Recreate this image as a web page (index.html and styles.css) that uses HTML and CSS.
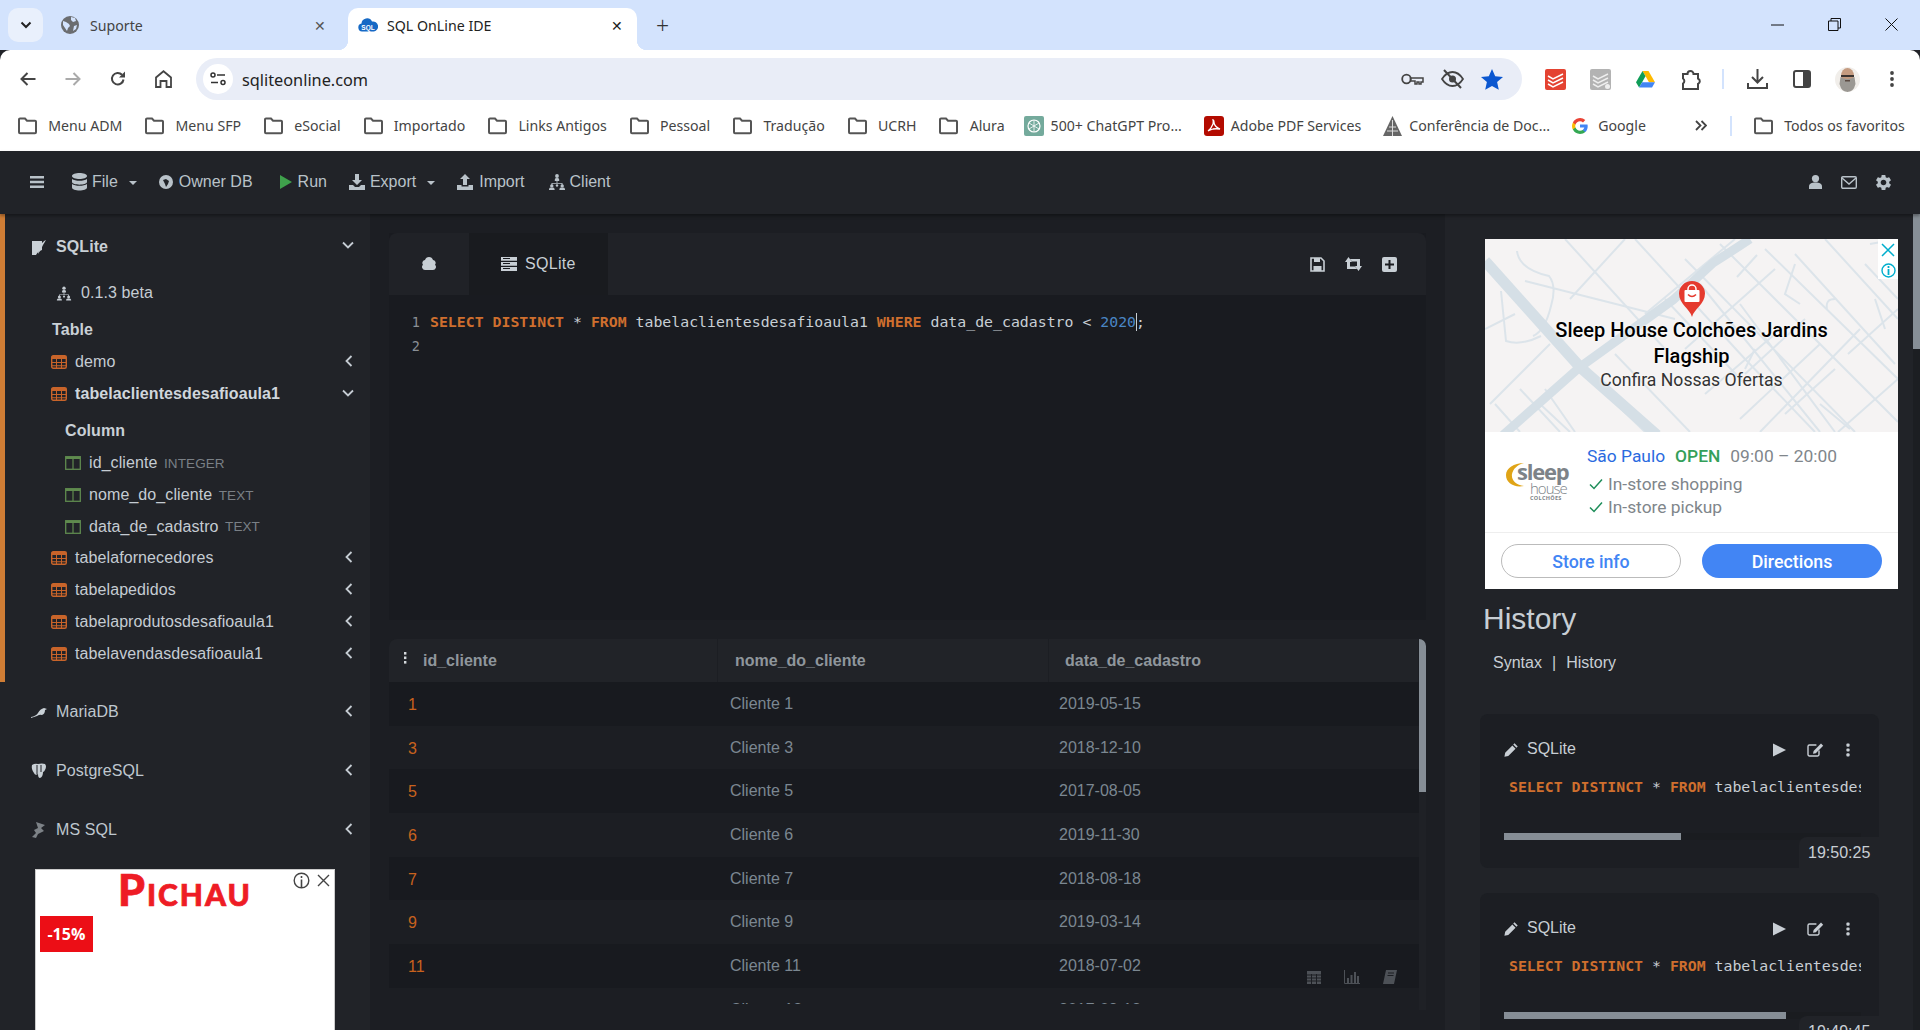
FILE: index.html
```html
<!DOCTYPE html>
<html lang="en">
<head>
<meta charset="utf-8">
<title>SQL OnLine IDE</title>
<link rel="stylesheet" href="styles.css">
</head>
<body>
<svg class="defs" width="0" height="0" aria-hidden="true">
  <defs>
    <symbol id="folder" viewBox="0 0 20 18"><path d="M1.500 2.500a1 1 0 0 1 1-1h5l2 2.200h8a1 1 0 0 1 1 1v10.600a1 1 0 0 1-1 1h-15a1 1 0 0 1-1-1z" fill="none" stroke="#555" stroke-width="2"/></symbol>
    <symbol id="tbl" viewBox="0 0 16 14"><rect x=".7" y=".7" width="14.600" height="12.600" rx="1.500" fill="none" stroke="#c8642a" stroke-width="1.400"/><path d="M.7 1h14.600v3H.7zM.7 7h14.600v1H.7zM.7 10.200h14.600v1H.7zM5 4h1v9H5zM10 4h1v9h-1z" fill="#c8642a"/></symbol>
    <symbol id="col" viewBox="0 0 16 14"><rect x=".7" y=".7" width="14.600" height="12.600" fill="none" stroke="#5f8a4e" stroke-width="1.300"/><path d="M.7 1h14.600v2H.7zM7.400 2h1.200v11H7.400z" fill="#5f8a4e"/></symbol>
    <symbol id="left" viewBox="0 0 10 14"><path d="M7.500 2 2.500 7l5 5" fill="none" stroke="#c5ccd3" stroke-width="1.800"/></symbol>
    <symbol id="down" viewBox="0 0 14 10"><path d="M2 2.500l5 5 5-5" fill="none" stroke="#c5ccd3" stroke-width="1.800"/></symbol>
    <symbol id="site" viewBox="0 0 18 16"><circle cx="9" cy="2" r="1.900" fill="currentColor"/><path d="M6.800 7V5.400q0-1.300 2.200-1.300t2.200 1.300V7zM8.600 7h.8v2.500h-.8zM3.500 9h11v.8h-11zM3.500 9h.8v2h-.8zM13.700 9h.8v2h-.8z" fill="currentColor"/><circle cx="3.800" cy="11.900" r="1.700" fill="currentColor"/><circle cx="14.200" cy="11.900" r="1.700" fill="currentColor"/><circle cx="9" cy="11.500" r="1.200" fill="currentColor"/><path d="M1 16v-1q0-1.400 2.800-1.400t2.800 1.400v1zM11.400 16v-1q0-1.400 2.800-1.400t2.800 1.400v1z" fill="currentColor"/></symbol>
    <symbol id="pencil" viewBox="0 0 14 14"><path d="M9.800 1.200l3 3-1.200 1.200-3-3zM7.800 3.200l3 3-6.800 6.800-3.600.7.700-3.700z" fill="currentColor"/></symbol>
    <symbol id="edit" viewBox="0 0 17 14"><path d="M12 7.600v4a1.400 1.400 0 0 1-1.400 1.400H2.400A1.400 1.400 0 0 1 1 11.600V3.400A1.400 1.400 0 0 1 2.400 2h7" fill="none" stroke="currentColor" stroke-width="1.400"/><path d="M14 .6l2.200 2.200-7.400 7.400-2.800.6.600-2.800z" fill="currentColor"/></symbol>
    <symbol id="kebab" viewBox="0 0 4 14"><rect x=".4" y=".5" width="3.200" height="3.200" rx="1" fill="currentColor"/><rect x=".4" y="5.400" width="3.200" height="3.200" rx="1" fill="currentColor"/><rect x=".4" y="10.300" width="3.200" height="3.200" rx="1" fill="currentColor"/></symbol>
    <symbol id="gear" viewBox="0 0 24 24"><path d="M19.140 12.940c.04-.3.06-.61.06-.94 0-.32-.02-.64-.07-.94l2.030-1.580a.49.49 0 0 0 .12-.61l-1.920-3.320a.488.488 0 0 0-.59-.22l-2.390.96c-.5-.38-1.030-.7-1.620-.94l-.36-2.540a.484.484 0 0 0-.48-.41h-3.840c-.24 0-.43.17-.47.41l-.36 2.540c-.59.24-1.130.57-1.620.94l-2.390-.96c-.22-.08-.47 0-.59.22L2.740 8.870c-.12.21-.08.47.12.61l2.030 1.580c-.05.3-.09.63-.09.94s.02.64.07.94l-2.030 1.580a.49.49 0 0 0-.12.61l1.920 3.320c.12.22.37.29.59.22l2.390-.96c.5.38 1.030.7 1.620.94l.36 2.540c.05.24.24.41.48.41h3.840c.24 0 .44-.17.47-.41l.36-2.540c.59-.24 1.130-.56 1.620-.94l2.390.96c.22.08.47 0 .59-.22l1.920-3.320c.12-.22.07-.47-.12-.61l-2.010-1.580zM12 15.600c-1.980 0-3.600-1.620-3.600-3.600s1.620-3.600 3.600-3.600 3.600 1.620 3.600 3.600-1.620 3.600-3.600 3.600z" fill="currentColor"/></symbol>
    <symbol id="down-tray" viewBox="0 0 16 16"><path d="M6 0h4v6h3l-5 5-5-5h3zM0 11h4l2 2h4l2-2h4v5H0z" fill="currentColor"/></symbol>
    <symbol id="up-tray" viewBox="0 0 16 16"><path d="M8 0l5 5h-3v6H6V5H3zM0 11h4.500v1.500h7V11H16v5H0z" fill="currentColor"/></symbol>
    <symbol id="check" viewBox="0 0 14 12"><path d="M1 6.500l4 4L13 1.500" fill="none" stroke="#1e8e5a" stroke-width="1.500"/></symbol>
    <symbol id="play" viewBox="0 0 14 14"><path d="M0 0l14 7-14 7z" fill="currentColor"/></symbol>
  </defs>
</svg>

<header class="tabstrip">
  <button class="tab-list"><svg width="12" height="8" viewBox="0 0 12 8"><path d="M1.500 1.500 6 6l4.500-4.500" fill="none" stroke="#222" stroke-width="2"/></svg></button>
  <div class="tab">
    <svg class="favicon" width="18" height="18" viewBox="0 0 18 18"><circle cx="9" cy="9" r="9" fill="#6b6d70"/><path d="M2 5l3 1 3 2 1 2-2 2-1 3-2-3-2-3zM10 1l4 1 1 3-3 1-2-2zM13 10l3-1-1 4-3 2z" fill="#d3e3fd"/></svg>
    <span class="tab-title">Suporte</span>
    <span class="tab-x">✕</span>
  </div>
  <div class="tab active">
    <svg class="favicon" width="20" height="14" viewBox="0 0 20 14"><path d="M4 13.500a4 4 0 0 1-.5-7.900A5.500 5.500 0 0 1 14 3.500a5 5 0 0 1 2 10z" fill="#1669c5"/><text x="10" y="11.500" text-anchor="middle" class="fav-text">SQL</text></svg>
    <span class="tab-title">SQL OnLine IDE</span>
    <span class="tab-x">✕</span>
  </div>
  <span class="new-tab">+</span>
  <div class="win-controls">
    <svg width="13" height="2" viewBox="0 0 13 2"><path d="M0 1h13" stroke="#111" stroke-width="1"/></svg>
    <svg width="13" height="13" viewBox="0 0 13 13"><path d="M.5 3h9.500v9.500H.5zM3 3V.5h9.500V10H10" fill="none" stroke="#111"/></svg>
    <svg width="13" height="13" viewBox="0 0 13 13"><path d="M.5.5l12 12M12.500.5l-12 12" stroke="#111" fill="none"/></svg>
  </div>
</header>

<nav class="toolbar">
  <svg class="tb back" width="16" height="14" viewBox="0 0 16 14"><path d="M15.500 7H2M7.500 1 1.500 7l6 6" fill="none" stroke="#444" stroke-width="2"/></svg>
  <svg class="tb fwd" width="16" height="14" viewBox="0 0 16 14"><path d="M.5 7H14M8.500 1l6 6-6 6" fill="none" stroke="#aaa" stroke-width="2"/></svg>
  <svg class="tb reload" width="16" height="16" viewBox="0 0 16 16"><path d="M13.500 8.500A5.800 5.800 0 1 1 12 3.800" fill="none" stroke="#444" stroke-width="2"/><path d="M15 .5v6H9z" fill="#444"/></svg>
  <svg class="tb home" width="17" height="18" viewBox="0 0 17 18"><path d="M1 7.500 8.500 1.200 16 7.500V17h-4.500v-6h-6v6H1z" fill="none" stroke="#444" stroke-width="1.800"/></svg>
  <div class="omnibox">
    <span class="site-info"><svg width="16" height="14" viewBox="0 0 16 14"><circle cx="3" cy="3" r="2" fill="none" stroke="#333" stroke-width="1.500"/><path d="M7 3h8M1 10.500h7" stroke="#333" stroke-width="1.600"/><circle cx="13" cy="10.500" r="2" fill="none" stroke="#333" stroke-width="1.500"/></svg></span>
    <span class="url">sqliteonline.com</span>
    <div class="omni-right">
      <svg width="23" height="13" viewBox="0 0 23 13"><circle cx="5.500" cy="6" r="4.300" fill="none" stroke="#444" stroke-width="1.800"/><path d="M9.500 5h12.500v4h-2v2h-2V9h-2v2h-2V8H9.500z" fill="none" stroke="#444" stroke-width="1.500"/></svg>
      <svg width="23" height="20" viewBox="0 0 23 20"><path d="M1 10q4.500-7 10.500-7T22 10q-4.500 7-10.500 7T1 10z" fill="none" stroke="#444" stroke-width="1.800"/><circle cx="11.500" cy="10" r="3.500" fill="#444"/><path d="M3 1l17 18" stroke="#444" stroke-width="2"/></svg>
      <svg width="22" height="21" viewBox="0 0 22 21"><path d="M11 0l3.200 7.200 7.800.8-5.900 5.100 1.700 7.700L11 16.900 4.200 20.800l1.700-7.700L0 8l7.800-.8z" fill="#0b57d0"/></svg>
    </div>
  </div>
  <div class="extensions">
    <svg class="ext-a" width="21" height="21" viewBox="0 0 21 21"><rect width="21" height="21" rx="2" fill="#e44332"/><path d="M3 7l5 3 10-5M3 11l5 3 10-5M3 15l5 3 10-5" fill="none" stroke="#fff" stroke-width="1.500"/></svg>
    <svg class="ext-b" width="21" height="21" viewBox="0 0 21 21"><rect width="21" height="21" rx="2" fill="#b3b3b3"/><path d="M3 7l5 3 10-5M3 11l5 3 10-5M3 15l5 3 10-5" fill="none" stroke="#eee" stroke-width="1.500"/><circle cx="17.500" cy="17.500" r="2.500" fill="#eee"/></svg>
    <svg class="ext-c" width="19" height="17" viewBox="0 0 19 17"><path d="M6.500 0h6l6.500 11.200h-6z" fill="#ffba00"/><path d="M6.500 0l3 5.200-6.400 11.300L0 11.200z" fill="#0f9d58"/><path d="M3.100 16.500l3-5.300H19l-3 5.300z" fill="#4285f4"/></svg>
    <svg class="ext-d" width="21" height="21" viewBox="0 0 21 21"><path d="M2 5h4.500a3 3 0 1 1 6 0H17v4.500a3 3 0 0 1 0 5.500v5H2v-5.500a3 3 0 0 0 0-5z" fill="none" stroke="#444" stroke-width="2"/></svg>
    <span class="ext-sep"></span>
    <svg class="ext-e" width="21" height="20" viewBox="0 0 21 20"><path d="M10.500 0v13M5 8l5.500 5.500L16 8M1 14v5h19v-5" fill="none" stroke="#444" stroke-width="2"/></svg>
    <svg class="ext-f" width="18" height="18" viewBox="0 0 18 18"><rect x="1" y="1" width="16" height="16" rx="2" fill="none" stroke="#444" stroke-width="2"/><rect x="10" y="1" width="7" height="16" fill="#444"/></svg>
    <svg class="ext-g" width="25" height="25" viewBox="0 0 25 25"><defs><clipPath id="av"><circle cx="12.500" cy="12.500" r="12.500"/></clipPath></defs><g clip-path="url(#av)"><rect width="25" height="25" fill="#f1eeea"/><ellipse cx="12.500" cy="9" rx="6.500" ry="8" fill="#c49b80"/><path d="M5.500 10q7 4 14 0l1 7q-2 8-8 8t-8-8z" fill="#9b9893"/><rect x="6" y="8" width="13" height="2" fill="#3a3330"/><rect x="10" y="13" width="5" height="1.500" fill="#5b4a42"/></g></svg>
    <svg class="ext-h" width="4" height="16" viewBox="0 0 4 16"><circle cx="2" cy="2" r="1.900" fill="#444"/><circle cx="2" cy="8" r="1.900" fill="#444"/><circle cx="2" cy="14" r="1.900" fill="#444"/></svg>
  </div>
</nav>

<nav class="bookmarks">
  <span class="bm"><svg width="21" height="18"><use href="#folder"/></svg>Menu ADM</span>
  <span class="bm"><svg width="21" height="18"><use href="#folder"/></svg>Menu SFP</span>
  <span class="bm"><svg width="21" height="18"><use href="#folder"/></svg>eSocial</span>
  <span class="bm"><svg width="21" height="18"><use href="#folder"/></svg>Importado</span>
  <span class="bm"><svg width="21" height="18"><use href="#folder"/></svg>Links Antigos</span>
  <span class="bm"><svg width="21" height="18"><use href="#folder"/></svg>Pessoal</span>
  <span class="bm"><svg width="21" height="18"><use href="#folder"/></svg>Tradução</span>
  <span class="bm"><svg width="21" height="18"><use href="#folder"/></svg>UCRH</span>
  <span class="bm"><svg width="21" height="18"><use href="#folder"/></svg>Alura</span>
  <span class="bm bm-ic bm-gpt"><svg width="20" height="20" viewBox="0 0 20 20"><rect width="20" height="20" rx="2" fill="#74aa9c"/><circle cx="10" cy="10" r="6" fill="none" stroke="#fff" stroke-width="1.200"/><path d="M10 4v12M5 7l10 6M15 7L5 13" stroke="#fff" stroke-width=".8"/></svg>500+ ChatGPT Pro...</span>
  <span class="bm bm-ic"><svg width="20" height="20" viewBox="0 0 20 20"><rect width="20" height="20" rx="3" fill="#b30b00"/><path d="M4 15q3-2 5-7 .5-3 0-4 1 0 1 3 1 4 6 6-4-.5-7 0-3 1-5 2z" fill="none" stroke="#fff" stroke-width="1.300"/></svg>Adobe PDF Services</span>
  <span class="bm bm-ic"><svg width="19" height="20" viewBox="0 0 19 20"><path d="M9.500 0L19 20H0z" fill="#666"/><path d="M9.500 4v16M6 11h7M4 15h11" stroke="#ddd" stroke-width="1"/></svg>Conferência de Doc...</span>
  <span class="bm"><svg width="16" height="16" viewBox="0 0 16 16"><path d="M15.700 8.200c0-.6-.1-1.100-.2-1.600H8v3h4.300a3.700 3.700 0 0 1-1.600 2.400v2h2.600c1.500-1.400 2.400-3.400 2.400-5.800z" fill="#4285f4"/><path d="M8 16c2.200 0 4-.7 5.300-2l-2.600-2c-.7.500-1.600.8-2.700.8-2.100 0-3.800-1.400-4.500-3.300H.9v2.100A8 8 0 0 0 8 16z" fill="#34a853"/><path d="M3.500 9.500a4.800 4.800 0 0 1 0-3V4.400H.9a8 8 0 0 0 0 7.200z" fill="#fbbc05"/><path d="M8 3.200c1.200 0 2.200.4 3 1.200l2.300-2.300A8 8 0 0 0 .9 4.400l2.600 2.100C4.200 4.600 5.900 3.200 8 3.200z" fill="#ea4335"/></svg>Google</span>
  <span class="bm-more"><svg width="12" height="11" viewBox="0 0 12 11"><path d="M1 1l4.500 4.500L1 10M6.500 1 11 5.500 6.500 10" fill="none" stroke="#444" stroke-width="1.800"/></svg></span>
  <span class="bm-sep"></span>
  <span class="bm bm-all"><svg width="21" height="18"><use href="#folder"/></svg>Todos os favoritos</span>
</nav>

<div class="app-nav">
  <div class="app-nav-left">
    <svg class="nav-bars" width="14" height="12" viewBox="0 0 14 12"><path d="M0 0h14v2.400H0zM0 4.800h14v2.400H0zM0 9.600h14V12H0z" fill="#b9c2c9"/></svg>
    <span class="nav-item nav-file"><svg width="15" height="18" viewBox="0 0 15 18"><path d="M0 3c0-4 15-4 15 0s-15 4-15 0zM0 6c3 2.400 12 2.400 15 0v3c0 3.500-15 3.500-15 0zM0 11c3 2.400 12 2.400 15 0v3.500c0 4-15 4-15 0z" fill="#b9c2c9"/></svg>File<i class="caret"></i></span>
    <span class="nav-item nav-owner"><svg width="14" height="14" viewBox="0 0 14 14"><circle cx="7" cy="7" r="7" fill="#b9c2c9"/><path d="M4 5l3-1 3 2-1 3-2 3-1-3z" fill="#212328"/></svg>Owner DB</span>
    <span class="nav-item nav-run"><svg width="12" height="14" viewBox="0 0 12 14"><path d="M0 0l12 7-12 7z" fill="#3fa14c"/></svg>Run</span>
    <span class="nav-item nav-export"><svg width="16" height="16"><use href="#down-tray"/></svg>Export<i class="caret"></i></span>
    <span class="nav-item nav-import"><svg width="16" height="16"><use href="#up-tray"/></svg>Import</span>
    <span class="nav-item nav-client"><svg width="18" height="16"><use href="#site"/></svg>Client</span>
  </div>
  <div class="app-nav-right">
    <svg class="nav-user" width="13" height="14" viewBox="0 0 13 14"><circle cx="6.500" cy="3.600" r="3.600" fill="#b9c2c9"/><path d="M0 14v-2.500C0 8.800 2.500 7.500 6.500 7.500s6.500 1.300 6.500 4V14z" fill="#b9c2c9"/></svg>
    <svg class="nav-mail" width="16" height="13" viewBox="0 0 16 13"><rect x=".7" y=".7" width="14.600" height="11.600" rx="1.200" fill="none" stroke="#b9c2c9" stroke-width="1.400"/><path d="M1 2l7 6 7-6" fill="none" stroke="#b9c2c9" stroke-width="1.400"/></svg>
    <svg class="gear" width="19" height="19"><use href="#gear"/></svg>
  </div>
</div>

<main class="workspace">
  <aside class="sidebar">
    <section class="db-open">
      <div class="db-head">
        <svg class="db-ico" width="15" height="15" viewBox="0 0 15 15"><path d="M0 1h10v9q-4 1-6 5H0z" fill="#c9d0d6"/><path d="M14 0q-3 1-6 6-2 4-2 8 3-4 5-9z" fill="#c9d0d6"/></svg>
        <strong class="db-name">SQLite</strong>
        <svg class="chev" width="14" height="10"><use href="#down"/></svg>
      </div>
      <div class="version"><svg width="16" height="15"><use href="#site"/></svg>0.1.3 beta</div>
      <div class="label-table">Table</div>
      <div class="t-row"><svg width="16" height="14"><use href="#tbl"/></svg><span>demo</span><svg class="chev-l" width="10" height="14"><use href="#left"/></svg></div>
      <div class="t-row t-open"><svg width="16" height="14"><use href="#tbl"/></svg><span>tabelaclientesdesafioaula1</span><svg class="chev-d" width="14" height="10"><use href="#down"/></svg></div>
      <div class="label-col">Column</div>
      <div class="c-row"><svg width="16" height="14"><use href="#col"/></svg><span>id_cliente</span><small>INTEGER</small></div>
      <div class="c-row"><svg width="16" height="14"><use href="#col"/></svg><span>nome_do_cliente</span><small>TEXT</small></div>
      <div class="c-row c-last"><svg width="16" height="14"><use href="#col"/></svg><span>data_de_cadastro</span><small>TEXT</small></div>
      <div class="t-row"><svg width="16" height="14"><use href="#tbl"/></svg><span>tabelafornecedores</span><svg class="chev-l" width="10" height="14"><use href="#left"/></svg></div>
      <div class="t-row"><svg width="16" height="14"><use href="#tbl"/></svg><span>tabelapedidos</span><svg class="chev-l" width="10" height="14"><use href="#left"/></svg></div>
      <div class="t-row"><svg width="16" height="14"><use href="#tbl"/></svg><span>tabelaprodutosdesafioaula1</span><svg class="chev-l" width="10" height="14"><use href="#left"/></svg></div>
      <div class="t-row"><svg width="16" height="14"><use href="#tbl"/></svg><span>tabelavendasdesafioaula1</span><svg class="chev-l" width="10" height="14"><use href="#left"/></svg></div>
    </section>
    <div class="db-row"><svg width="16" height="12" viewBox="0 0 16 12"><path d="M0 11Q5 10 7 7 9 3 13 2l3 1-2 1q0 4-3 5-2-1-5 1-3 1-6 2z" fill="#c9d0d6"/></svg><span>MariaDB</span><svg class="chev-l" width="10" height="14"><use href="#left"/></svg></div>
    <div class="db-row"><svg width="16" height="16" viewBox="0 0 16 16"><path d="M1 2q3-2 6-1 4-1 7 0 2 2 0 6-1 2-2 2 0 5-3 6-2 0-2-4-3 2-4-1-3-4-2-8z" fill="#c9d0d6"/><path d="M6 2v9M10 2v7" stroke="#212328"/></svg><span>PostgreSQL</span><svg class="chev-l" width="10" height="14"><use href="#left"/></svg></div>
    <div class="db-row"><svg width="16" height="16" viewBox="0 0 16 16"><path d="M5 0l9 3-4 3 3 3-6 3-2 4-4-1 4-4-2-3 4-2z" fill="#7d8287"/></svg><span>MS SQL</span><svg class="chev-l" width="10" height="14"><use href="#left"/></svg></div>
    <div class="side-ad">
      <span class="pichau">Pichau</span>
      <svg class="ad-i" width="17" height="17" viewBox="0 0 17 17"><circle cx="8.500" cy="8.500" r="7.300" fill="none" stroke="#444" stroke-width="1.400"/><path d="M8.500 7.500V16M8.500 4v2" stroke="#444" stroke-width="1.600"/></svg>
      <svg class="ad-x" width="13" height="13" viewBox="0 0 13 13"><path d="M1 1l11 11M12 1 1 12" stroke="#444" stroke-width="1.400"/></svg>
      <span class="discount">-15%</span>
    </div>
  </aside>

  <section class="center">
    <div class="editor">
      <div class="ed-tabs">
        <span class="ed-cloud"><svg width="14" height="15" viewBox="0 0 14 15"><path d="M3 15a3 3 0 0 1-2-5.200A3 3 0 0 1 3 5 4.200 4.200 0 0 1 11 5a3 3 0 0 1 2 4.800A3 3 0 0 1 11 15z" fill="#c8cfd5"/></svg></span>
        <span class="ed-tab"><svg width="16" height="14" viewBox="0 0 16 14"><path d="M0 0h16v3.800H0zM0 5h16v3.800H0zM0 10h16v4H0z" fill="#c8cfd5"/><path d="M2 1.500h7M2 6.500h7M2 11.500h7" stroke="#191b1f"/></svg>SQLite</span>
        <div class="ed-actions">
          <svg width="15" height="15" viewBox="0 0 15 15"><path d="M1 1h10l3 3v10H1z" fill="none" stroke="#c8cfd5" stroke-width="1.600"/><path d="M4 1h6v4H4zM3.500 9h8v5h-8z" fill="#c8cfd5"/></svg>
          <svg width="17" height="14" viewBox="0 0 17 14"><path d="M3.500 0L7 5H5v4.500h5l2 2.500H2V5H0zM13.500 14L10 9h2V4.500H7L5 2h10v7h2z" fill="#c8cfd5"/></svg>
          <svg width="15" height="15" viewBox="0 0 15 15"><rect width="15" height="15" rx="2" fill="#c8cfd5"/><path d="M7.500 3v9M3 7.500h9" stroke="#191b1f" stroke-width="2"/></svg>
        </div>
      </div>
      <div class="ed-body">
        <div class="code-line"><span class="ln">1</span><code><b>SELECT DISTINCT</b> * <b>FROM</b> tabelaclientesdesafioaula1 <b>WHERE</b> data_de_cadastro &lt; <em>2020</em><i class="cursor"></i>;</code></div>
        <div class="code-line"><span class="ln">2</span><code></code></div>
      </div>
    </div>

    <div class="results">
      <div class="grid-wrap">
        <div class="grid-head">
          <div class="h1"><svg class="h-kebab" width="4" height="12" viewBox="0 0 4 12"><rect x="1" y="0" width="2.400" height="2.600" fill="#d5d9dd"/><rect x="1" y="4.500" width="2.400" height="2.600" fill="#d5d9dd"/><rect x="1" y="9" width="2.400" height="2.600" fill="#d5d9dd"/></svg>id_cliente</div>
          <div class="h2">nome_do_cliente</div>
          <div class="h3">data_de_cadastro</div>
        </div>
        <div class="row"><span class="id">1</span><span class="c2">Cliente 1</span><span class="c3">2019-05-15</span></div>
        <div class="row alt"><span class="id">3</span><span class="c2">Cliente 3</span><span class="c3">2018-12-10</span></div>
        <div class="row"><span class="id">5</span><span class="c2">Cliente 5</span><span class="c3">2017-08-05</span></div>
        <div class="row alt"><span class="id">6</span><span class="c2">Cliente 6</span><span class="c3">2019-11-30</span></div>
        <div class="row"><span class="id">7</span><span class="c2">Cliente 7</span><span class="c3">2018-08-18</span></div>
        <div class="row alt"><span class="id">9</span><span class="c2">Cliente 9</span><span class="c3">2019-03-14</span></div>
        <div class="row"><span class="id">11</span><span class="c2">Cliente 11</span><span class="c3">2018-07-02</span></div>
        <div class="row alt"><span class="id">13</span><span class="c2">Cliente 13</span><span class="c3">2017-03-13</span></div>
        <div class="float-tools">
          <svg width="14" height="13" viewBox="0 0 14 13"><path d="M0 0h14v13H0z" fill="#4d5157"/><path d="M0 4h14M0 7h14M0 10h14M4.500 3v10M9.500 3v10" stroke="#1c1e23"/></svg>
          <svg width="16" height="14" viewBox="0 0 16 14"><path d="M.5 0v13.500H16" fill="none" stroke="#4d5157"/><path d="M3 8h2v5H3zM6.500 5h2v8h-2zM10 2h2v11h-2zM13 6h2v7h-2z" fill="#4d5157"/></svg>
          <svg width="14" height="14" viewBox="0 0 14 14"><path d="M3 0h11l-3 14H0z" fill="#4d5157"/><path d="M5 3h6M4.500 5.500h6" stroke="#1c1e23"/></svg>
        </div>
      </div>
      <div class="v-scroll"><span></span></div>
    </div>
  </section>

  <aside class="rightpane">
    <div class="rp-content">
      <div class="map-ad">
        <div class="map">
          <svg class="map-bg" width="413" height="193" viewBox="0 0 413 193">
            <rect width="413" height="193" fill="#f5f3f3"/>
            <g fill="none" stroke="#dce4ea" stroke-width="2">
              <path d="M32 12q2 18 32 25 8 10 2 30-6 25-18 30M40 42l150 38M16 52l5 50q15 5 35-5M0 90l30-15M5 165l60-60M35 150l40 43M10 165l25 28M55 165l30 28"/>
              <path d="M80 0l100 110M150 0l110 120 70 73M215 45l120 148M250 0l-90 75M85 60l55-60M290 30l-90 80M255 65l95 128M310 15l100 110M340 0l73 80M290 95l-70 60M335 105l-80 75M375 90l-100 103M413 140l-60 53M380 25l33 35M180 60l80 85M95 130l65 63M130 115l75 78M60 150l30 43M200 20l170 173M235 5l178 178M280 10l133 130M320 80l-60 55M350 130l-50 45M413 70l-50 45M385 5l28-5"/>
              <path d="M310 25l-10 30 15 10M350 60q-10 0-8 10M390 60l10 30M270 110l-10 20M335 165l30 25M252 38l20-22"/>
            </g>
            <path d="M0 22 95 128 172 196" fill="none" stroke="#d5dfe6" stroke-width="11"/>
            <path d="M265 0Q250 10 228 24L188 61 95 128 18 196" fill="none" stroke="#d5dfe6" stroke-width="9"/>
          </svg>
          <svg class="pin" width="26" height="36" viewBox="0 0 26 36"><path d="M13 36C11 28 0 23 0 12.500a13 12.500 0 0 1 26 0C26 23 15 28 13 36z" fill="#e53a2e"/><rect x="5.500" y="9" width="15" height="12" rx="1" fill="#fff"/><path d="M9 10V8a4 4 0 0 1 8 0v2" fill="none" stroke="#fff" stroke-width="1.500"/><path d="M9 13.500q4 4 8 0" fill="none" stroke="#e53a2e" stroke-width="1.500"/></svg>
          <div class="map-title">Sleep House Colchões Jardins<br>Flagship</div>
          <div class="map-sub">Confira Nossas Ofertas</div>
          <div class="ad-choices">
            <svg width="14" height="14" viewBox="0 0 14 14"><path d="M1 1l12 12M13 1 1 13" stroke="#00aecd" stroke-width="1.500"/></svg>
            <svg width="15" height="15" viewBox="0 0 15 15"><circle cx="7.500" cy="7.500" r="6.500" fill="none" stroke="#00aecd" stroke-width="1.400"/><path d="M7.500 6v6M7.500 3v2" stroke="#00aecd" stroke-width="1.800"/></svg>
          </div>
        </div>
        <div class="store">
          <div class="store-logo">
            <svg class="moon" width="18" height="24" viewBox="0 0 18 24"><path d="M18 0C8 0 0 5 0 12c0 8 8 13 18 11C10 22 5 17 6 11 7 6 11 2 18 0z" fill="#e0a416"/></svg>
            <span class="logo-sleep">sleep</span>
            <span class="logo-house">house</span>
            <span class="logo-col">COLCHÕES</span>
          </div>
          <div class="store-info">
            <div class="store-top"><span class="city">São Paulo</span><span class="open">OPEN</span><span class="hours">09:00 – 20:00</span></div>
            <div class="feat"><svg width="14" height="12"><use href="#check"/></svg>In-store shopping</div>
            <div class="feat"><svg width="14" height="12"><use href="#check"/></svg>In-store pickup</div>
          </div>
        </div>
        <div class="ad-buttons"><span class="btn-out">Store info</span><span class="btn-blue">Directions</span></div>
      </div>

      <h2 class="hist-title">History</h2>
      <div class="hist-links">Syntax&nbsp; | &nbsp;History</div>

      <article class="card">
        <div class="card-head"><svg width="15" height="15"><use href="#pencil"/></svg><span class="card-db">SQLite</span><svg class="c-play" width="13" height="14"><use href="#play"/></svg><svg class="c-edit" width="17" height="14"><use href="#edit"/></svg><svg class="c-keb" width="4" height="14"><use href="#kebab"/></svg></div>
        <div class="card-code"><b>SELECT DISTINCT</b> * <b>FROM</b> tabelaclientesdesafioaula1</div>
        <div class="card-scroll"><span class="thumb-a"></span></div>
        <div class="time">19:50:25</div>
      </article>
      <article class="card">
        <div class="card-head"><svg width="15" height="15"><use href="#pencil"/></svg><span class="card-db">SQLite</span><svg class="c-play" width="13" height="14"><use href="#play"/></svg><svg class="c-edit" width="17" height="14"><use href="#edit"/></svg><svg class="c-keb" width="4" height="14"><use href="#kebab"/></svg></div>
        <div class="card-code"><b>SELECT DISTINCT</b> * <b>FROM</b> tabelaclientesdesafioaula1</div>
        <div class="card-scroll"><span class="thumb-b"></span></div>
        <div class="time">19:49:45</div>
      </article>
    </div>
    <div class="page-scroll"><span></span></div>
  </aside>
</main>
</body>
</html>
```

FILE: styles.css
```css
* { box-sizing: border-box; }
html, body { margin: 0; height: 100%; overflow: hidden; }
body { width: 1920px; height: 1030px; background: #212328; font-family: "Liberation Sans", Arial, sans-serif; font-size: 16px; color: #c5ccd3; display: flex; flex-direction: column; }
.defs { position: absolute; }
svg { flex: none; display: block; }

/* browser chrome */
.tabstrip { height: 50px; background: #d3e3fd; display: flex; align-items: flex-end; padding-left: 8px; font-family: "Noto Sans", sans-serif; font-size: 14.2px; color: #444; flex: none; }
.tab-list { width: 35px; height: 34px; margin-bottom: 8px; border: 0; padding: 0; border-radius: 10px; background: #e9f0fc; display: flex; align-items: center; justify-content: center; }
.tab { width: 289px; height: 42px; display: flex; align-items: center; position: relative; border-radius: 10px 10px 0 0; padding-bottom: 8px; }
.tab:nth-child(2) { margin-left: 16px; width: 289px; padding-left: 2px; }
.tab .favicon { margin-right: 11px; }
.tab-title { flex: 1; }
.tab-x { width: 20px; text-align: center; margin-right: 18px; font-size: 14px; color: #555; }
.tab.active { background: #fff; padding-left: 10px; color: #222; }
.tab.active .favicon { margin-right: 9px; }
.tab.active .tab-x { color: #222; margin-right: 10px; }
.tab.active::before, .tab.active::after { content: ""; position: absolute; bottom: 0; width: 10px; height: 10px; }
.tab.active::before { left: -10px; background: radial-gradient(circle at 0 0, transparent 10px, #fff 10.500px); }
.tab.active::after { right: -10px; background: radial-gradient(circle at 100% 0, transparent 10px, #fff 10.500px); }
.fav-text { font: 700 6.500px "Liberation Sans", sans-serif; fill: #fff; }
.new-tab { margin: 0 0 13px 19px; font-size: 23px; line-height: 24px; color: #333; font-weight: 300; }
.win-controls { margin: 0 22px 19px auto; display: flex; align-items: center; gap: 44px; height: 13px; }

.toolbar { height: 50px; background: #fff; border-radius: 10px 10px 0 0; display: flex; align-items: flex-end; padding: 0 0 0 20px; flex: none; }
.tb { margin-bottom: 14px; }
.fwd, .reload, .home { margin-left: 29px; }
.reload { margin-bottom: 13px; }
.home { margin-bottom: 12px; }
.omnibox { margin-left: 24px; width: 1326px; height: 42px; border-radius: 21px; background: #e9edf7; display: flex; align-items: center; padding-left: 10px; }
.site-info { width: 30px; height: 30px; border-radius: 50%; background: #fff; display: flex; align-items: center; justify-content: center; margin-left: -3px; }
.url { margin: 1px 0 0 9px; font-family: "Noto Sans", sans-serif; font-size: 16.3px; color: #222; }
.omni-right { margin-left: auto; display: flex; align-items: center; gap: 17px; padding-right: 19px; }
.extensions { flex: 1; height: 42px; display: flex; align-items: center; padding-left: 23px; }
.ext-b { margin-left: 24px; }
.ext-c { margin-left: 25px; }
.ext-d { margin-left: 26px; }
.ext-sep { width: 2px; height: 20px; background: #d3e3fd; margin-left: 20px; }
.ext-e { margin-left: 23px; }
.ext-f { margin-left: 25px; }
.ext-g { margin-left: 24px; }
.ext-h { margin-left: 30px; }

.bookmarks { height: 51px; background: #fff; display: flex; align-items: center; padding-left: 7px; font-family: "Noto Sans", sans-serif; font-size: 14.15px; color: #444; flex: none; white-space: nowrap; }
.bm { display: flex; align-items: center; gap: 10.200px; padding: 0 12px 0 10px; }
.bm svg { margin-top: 1px; }
.bm-ic { gap: 7px; }
.bm-gpt { margin-left: -3px; }
.bm-more { margin-left: 37px; }
.bm-sep { width: 2px; height: 20px; background: #d3e3fd; margin-left: 23px; }
.bm-all { margin-left: 11px; }

/* app bar */
.app-nav { height: 63px; background: #212328; display: flex; align-items: center; justify-content: space-between; padding: 0 29px 1px 30px; color: #b9c2c9; flex: none; position: relative; box-shadow: 0 2px 3px rgba(0,0,0,.35); z-index: 2; }
.app-nav-left { display: flex; align-items: center; }
.app-nav-right { display: flex; align-items: center; }
.nav-mail { margin-left: 19px; }
.gear { margin-left: 17px; margin-right: -2px; }
.nav-item { display: flex; align-items: center; gap: 6px; }
.nav-file { margin-left: 28px; gap: 5px; }
.nav-owner { margin-left: 22px; }
.nav-run { margin-left: 27px; }
.nav-export { margin-left: 22px; gap: 5px; }
.nav-import { margin-left: 22px; }
.nav-client { margin-left: 23px; gap: 4px; }
.caret { width: 0; height: 0; border: 4px solid transparent; border-top-color: #b9c2c9; border-bottom: 0; margin-left: 6px; margin-top: 1px; }

.workspace { flex: 1; display: grid; grid-template-columns: 370px 1075px 475px; min-height: 0; }

/* sidebar */
.sidebar { background: #212328; overflow: hidden; display: flex; flex-direction: column; letter-spacing: .09px; }
.db-open { border-left: 5px solid #cf7d35; height: 468px; padding: 1px 0 0 27px; flex: none; }
.db-head { height: 64px; display: flex; align-items: center; }
.db-name { margin-left: 9px; color: #c9d0d6; }
.chev { margin-left: auto; margin-right: 15px; margin-top: -4px; }
.version { height: 28px; display: flex; align-items: center; gap: 9px; padding-left: 24px; color: #c5ccd3; }
.label-table { margin: 7px 0 0 20px; height: 32px; line-height: 32px; font-weight: 700; color: #c9d0d6; }
.t-row { height: 32px; display: flex; align-items: center; padding-left: 19px; color: #c5ccd3; }
.t-row span { margin-left: 8px; }
.t-open span { font-weight: 700; color: #d0d6dc; }
.chev-l { margin-left: auto; margin-right: 16px; margin-top: -2px; }
.chev-d { margin-left: auto; margin-right: 15px; margin-top: -2px; }
.label-col { margin: 5px 0 0 33px; height: 32px; line-height: 32px; font-weight: 700; color: #c9d0d6; }
.c-row { height: 32px; display: flex; align-items: center; padding-left: 33px; color: #c5ccd3; }
.c-row span { margin-left: 8px; }
.c-row small { margin-left: 6.500px; font-size: 13.5px; color: #7a8086; }
.c-last { height: 31px; }
.db-row { height: 59px; flex: none; display: flex; align-items: center; padding: 1px 0 0 31px; color: #bfc7cf; }
.db-row span { margin-left: 9px; }
.db-row .chev-l { margin-right: 16px; }
.side-ad { margin: 10px 0 0 35px; width: 300px; flex: 1; background: #fff; border: 1px solid #ccc; border-bottom: 0; position: relative; }
.pichau { display: block; text-align: center; font: 900 43px/36px Lato, sans-serif; font-variant: small-caps; color: #ee1c25; margin-top: 2px; letter-spacing: 2px; -webkit-text-stroke: .7px #ee1c25; }
.ad-i { position: absolute; top: 2px; right: 24px; }
.ad-x { position: absolute; top: 4px; right: 4px; }
.discount { position: absolute; top: 46px; left: 4px; width: 53px; height: 36px; background: #ec0e16; color: #fff; text-align: center; font: 700 16px/36px "Open Sans", sans-serif; }

/* center */
.center { background: #1c1e23; padding: 19px 19px 0; min-width: 0; }
.editor { height: 387px; background: #191b20; display: flex; flex-direction: column; }
.ed-tabs { height: 62px; background: #202227; border-radius: 8px 8px 0 0; display: flex; flex: none; color: #c8cfd5; }
.ed-cloud { width: 80px; display: flex; align-items: center; justify-content: center; padding-bottom: 3px; }
.ed-tab { width: 139px; background: #191b1f; display: flex; align-items: center; gap: 8px; padding-left: 32px; letter-spacing: .3px; }
.ed-actions { margin-left: auto; display: flex; align-items: center; gap: 20px; padding-right: 29px; }
.ed-body { padding-top: 15px; font: 14.85px/24px "DejaVu Sans Mono", monospace; color: #c8cfd5; }
.code-line { display: flex; height: 24px; }
.ln { width: 31px; margin-right: 10px; text-align: right; color: #8a9096; flex: none; font-size: 13.500px; }
.code-line code { font: inherit; white-space: pre; }
.code-line b { color: #cf6f2e; }
.code-line em { color: #4a86c5; font-style: normal; }
.cursor { display: inline-block; width: 1px; height: 18px; background: #c8cfd5; vertical-align: -4px; margin-right: -1px; }

.results { margin-top: 19px; height: 371px; display: flex; }
.grid-wrap { width: 1030px; height: 365px; overflow: hidden; position: relative; border-radius: 8px 0 0 0; background: #1c1e23; }
.grid-head { height: 43px; background: #212328; display: grid; grid-template-columns: 329px 331px 1fr; color: #8f969c; font-weight: 700; }
.grid-head > div { display: flex; align-items: center; border-right: 1px solid #1c1e23; }
.h1 { padding-left: 14px; gap: 16px; }
.h-kebab { margin-top: -5px; }
.h2 { padding-left: 17px; }
.h3 { padding-left: 16px; }
.row { height: 43.700px; background: #181a1f; display: grid; grid-template-columns: 329px 331px 1fr; align-items: center; color: #7b8791; }
.row.alt { background: #1c1e23; }
.row .c2 { padding-left: 12px; }
.row .c3 { padding-left: 10px; }
.row .id { padding-left: 19px; color: #c8621e; padding-top: 2px; }
.float-tools { position: absolute; right: 22px; bottom: 20px; display: flex; align-items: center; gap: 23px; }
.v-scroll { width: 7px; background: #1f2126; height: 371px; border-radius: 0 8px 0 0; overflow: hidden; }
.v-scroll span { display: block; height: 153px; background: #868e96; }

/* right */
.rightpane { display: flex; background: #212328; min-width: 0; }
.rp-content { width: 468px; padding: 25px 0 0 35px; overflow: hidden; }
.page-scroll { width: 7px; background: #1c1e22; }
.page-scroll span { display: block; height: 135px; background: #868e96; }

.map-ad { margin-left: 5px; width: 413px; height: 350px; background: #fff; font-family: Roboto, sans-serif; }
.map { height: 193px; position: relative; overflow: hidden; text-align: center; color: #111; }
.map-bg { position: absolute; inset: 0; }
.pin { position: absolute; left: 194px; top: 42px; }
.map-title { position: absolute; top: 78px; left: 0; right: 0; font-weight: 500; font-size: 20px; line-height: 26px; color: #000; text-shadow: 0 0 3px #fff; }
.map-sub { position: absolute; top: 130px; left: 0; right: 0; font-size: 17.6px; line-height: 22px; color: #333; text-shadow: 0 0 3px #fff; }
.ad-choices { position: absolute; top: 0; right: 0; width: 20px; height: 40px; background: #fff; display: flex; flex-direction: column; align-items: center; gap: 6px; padding-top: 4px; }

.store { height: 101px; display: flex; border-bottom: 1px solid #eee; }
.store-logo { width: 102px; position: relative; color: #7d8388; flex: none; }
.moon { position: absolute; left: 21px; top: 31px; }
.logo-sleep { position: absolute; left: 32px; top: 30px; font: 700 22px/19px "Open Sans", sans-serif; letter-spacing: -1.200px; }
.logo-house { position: absolute; left: 45px; top: 50px; font: 300 15px/12px "Open Sans", sans-serif; letter-spacing: -1px; }
.logo-col { position: absolute; left: 45px; top: 62px; font: 700 5.500px/8px "Open Sans", sans-serif; letter-spacing: .3px; }
.store-info { padding-top: 13px; font-size: 17.4px; }
.store-top { height: 22px; line-height: 22px; display: flex; gap: 10px; }
.city { color: #2a6ae0; }
.open { color: #34a05a; font-weight: 500; }
.hours { color: #80868b; }
.feat { display: flex; align-items: center; gap: 5px; height: 23px; margin-left: 2px; color: #80868b; }
.store-top + .feat { margin-top: 5px; }
.ad-buttons { display: flex; justify-content: space-between; padding: 11px 16px 0; font-size: 17.8px; font-weight: 500; text-align: center; }
.btn-out, .btn-blue { width: 180px; height: 34px; line-height: 35px; border-radius: 17px; }
.btn-out { border: 1px solid #bbb; color: #4285f4; line-height: 33px; }
.btn-blue { background: #4285f4; color: #fff; }

.hist-title { margin: 12px 0 0 3px; font-size: 30px; line-height: 36px; font-weight: 400; color: #c8ced4; }
.hist-links { margin: 14px 0 0 13px; height: 24px; line-height: 24px; color: #c8ced4; word-spacing: .6px; }

.card { margin-top: 39px; width: 399px; height: 154px; background: #1c1e23; border-radius: 8px; position: relative; padding: 24px 18px 0 24px; }
.card + .card { margin-top: 25px; }
.card-head { height: 22px; display: flex; align-items: center; color: #c8ced4; }
.card-db { margin-left: 8px; }
.c-play { margin: 2px 0 0 auto; }
.c-edit { margin: 2px 0 0 21px; }
.c-keb { margin: 2px 11px 0 22px; }
.card-code { margin: 15px 0 0 5px; width: 352px; overflow: hidden; white-space: pre; font: 14.85px/24px "DejaVu Sans Mono", monospace; color: #c8ced4; }
.card-code b { color: #cf6f2e; }
.card-scroll { margin-top: 34px; height: 7px; width: 357px; background: #1a1c20; }
.card-scroll span { display: block; height: 7px; background: #868e96; }
.thumb-a { width: 177px; }
.thumb-b { width: 282px; }
.time { position: absolute; right: 0; bottom: 0; width: 80px; height: 31px; background: #212328; border-radius: 8px 0 0 0; padding-left: 9px; line-height: 31px; color: #c8ced4; }
```
